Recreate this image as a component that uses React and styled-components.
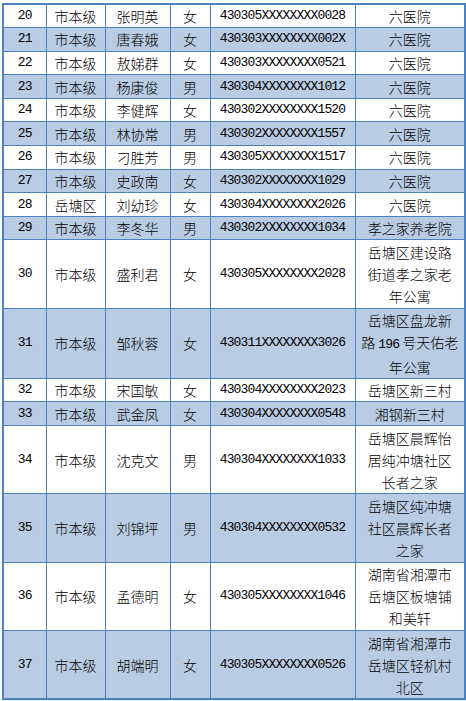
import React from "react";
import styled, { createGlobalStyle } from "styled-components";

const GlobalStyle = createGlobalStyle`
  html, body {
    margin: 0;
    padding: 0;
    background: #ffffff;
  }
  body {
    font-family: "Noto Sans CJK SC", "Liberation Sans", sans-serif;
    color: #000000;
  }
`;

const Page = styled.div`
  width: 466px;
  height: 701px;
  padding: 3px 0 0 2px;
  box-sizing: border-box;
  display: flex;
  flex-direction: column;
`;

const Table = styled.table`
  width: 462px;
  border-collapse: collapse;
  table-layout: fixed;
  border: 2px solid #4f81bd;
`;

const Row = styled.tr`
  height: ${(p) => (p.$tall ? "68.4px" : "23.6px")};
  background: ${(p) => (p.$shade ? "#b8cce4" : "#ffffff")};
`;

const Cell = styled.td`
  border: 1px solid #4f81bd;
  padding: 0;
  text-align: center;
  vertical-align: middle;
  font-size: 14px;
  font-weight: 300;
  line-height: 22px;
  white-space: nowrap;
  overflow: hidden;
`;

const NumCell = styled(Cell)`
  font-family: "Liberation Mono", "DejaVu Sans Mono", monospace;
  font-size: 13px;
  font-weight: 400;
  letter-spacing: -0.82px;
`;

const Num = styled.span`
  font-family: "Liberation Mono", "DejaVu Sans Mono", monospace;
  font-size: 13px;
  font-weight: 400;
  letter-spacing: -0.82px;
`;

const Line = styled.div`
  display: block;
`;

const Strip = styled.div`
  height: 4px;
  margin-left: -2px;
  background: #e4e9ef;
`;

const cols = [43, 59, 65, 40, 145, 110];

const rows = [
  ["20", "市本级", "张明英", "女", "430305XXXXXXXX0028", ["六医院"]],
  ["21", "市本级", "唐春娥", "女", "430303XXXXXXXX002X", ["六医院"]],
  ["22", "市本级", "敖娣群", "女", "430303XXXXXXXX0521", ["六医院"]],
  ["23", "市本级", "杨康俊", "男", "430304XXXXXXXX1012", ["六医院"]],
  ["24", "市本级", "李健辉", "女", "430302XXXXXXXX1520", ["六医院"]],
  ["25", "市本级", "林协常", "男", "430302XXXXXXXX1557", ["六医院"]],
  ["26", "市本级", "刁胜芳", "男", "430305XXXXXXXX1517", ["六医院"]],
  ["27", "市本级", "史政南", "女", "430302XXXXXXXX1029", ["六医院"]],
  ["28", "岳塘区", "刘幼珍", "女", "430304XXXXXXXX2026", ["六医院"]],
  ["29", "市本级", "李冬华", "男", "430302XXXXXXXX1034", ["孝之家养老院"]],
  ["30", "市本级", "盛利君", "女", "430305XXXXXXXX2028", ["岳塘区建设路", "街道孝之家老", "年公寓"]],
  ["31", "市本级", "邹秋蓉", "女", "430311XXXXXXXX3026", ["岳塘区盘龙新", ["路", "196", "号天佑老"], "年公寓"]],
  ["32", "市本级", "宋国敏", "女", "430304XXXXXXXX2023", ["岳塘区新三村"]],
  ["33", "市本级", "武金凤", "女", "430304XXXXXXXX0548", ["湘钢新三村"]],
  ["34", "市本级", "沈克文", "男", "430304XXXXXXXX1033", ["岳塘区晨辉怡", "居纯冲塘社区", "长者之家"]],
  ["35", "市本级", "刘锦坪", "男", "430304XXXXXXXX0532", ["岳塘区纯冲塘", "社区晨辉长者", "之家"]],
  ["36", "市本级", "孟德明", "女", "430305XXXXXXXX1046", ["湖南省湘潭市", "岳塘区板塘铺", "和美轩"]],
  ["37", "市本级", "胡端明", "女", "430305XXXXXXXX0526", ["湖南省湘潭市", "岳塘区轻机村", "北区"]],
];

const renderLine = (line, i) => {
  if (Array.isArray(line)) {
    const [before, digits, after] = line;
    return (
      <Line key={i}>
        {before} <Num>{digits}</Num> {after}
      </Line>
    );
  }
  return <Line key={i}>{line}</Line>;
};

export default function App() {
  return (
    <>
      <GlobalStyle />
      <Page>
        <Table>
          <colgroup>
            {cols.map((w, i) => (
              <col key={i} style={{ width: w }} />
            ))}
          </colgroup>
          <tbody>
            {rows.map(([no, level, name, sex, id, place], i) => (
              <Row key={no} $shade={i % 2 === 1} $tall={place.length > 1}>
                <NumCell>{no}</NumCell>
                <Cell>{level}</Cell>
                <Cell>{name}</Cell>
                <Cell>{sex}</Cell>
                <NumCell>{id}</NumCell>
                <Cell>{place.map(renderLine)}</Cell>
              </Row>
            ))}
          </tbody>
        </Table>
        <Strip />
      </Page>
    </>
  );
}
